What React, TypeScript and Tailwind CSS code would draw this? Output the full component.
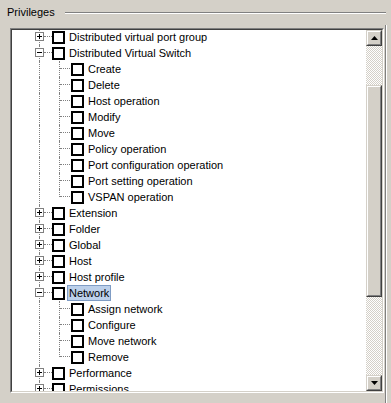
import React from "react";

type Row = {
  label: string;
  level: 0 | 1;
  expander?: "plus" | "minus";
  last?: boolean;
  selected?: boolean;
};

const rows: Row[] = [
  { label: "Distributed virtual port group", level: 0, expander: "plus" },
  { label: "Distributed Virtual Switch", level: 0, expander: "minus" },
  { label: "Create", level: 1 },
  { label: "Delete", level: 1 },
  { label: "Host operation", level: 1 },
  { label: "Modify", level: 1 },
  { label: "Move", level: 1 },
  { label: "Policy operation", level: 1 },
  { label: "Port configuration operation", level: 1 },
  { label: "Port setting operation", level: 1 },
  { label: "VSPAN operation", level: 1, last: true },
  { label: "Extension", level: 0, expander: "plus" },
  { label: "Folder", level: 0, expander: "plus" },
  { label: "Global", level: 0, expander: "plus" },
  { label: "Host", level: 0, expander: "plus" },
  { label: "Host profile", level: 0, expander: "plus" },
  { label: "Network", level: 0, expander: "minus", selected: true },
  { label: "Assign network", level: 1 },
  { label: "Configure", level: 1 },
  { label: "Move network", level: 1 },
  { label: "Remove", level: 1, last: true },
  { label: "Performance", level: 0, expander: "plus" },
  { label: "Permissions", level: 0, expander: "plus" },
];

function Expander({ kind }: { kind: "plus" | "minus" }) {
  return (
    <div className="absolute left-[5px] top-[3px] w-[9px] h-[9px] bg-white border border-[#808080]">
      <div className="absolute left-[1px] top-[3px] w-[5px] h-px bg-black" />
      {kind === "plus" && <div className="absolute left-[3px] top-[1px] w-px h-[5px] bg-black" />}
    </div>
  );
}

function Checkbox() {
  return <div className="w-[13px] h-[13px] shrink-0 border-2 border-black bg-white" />;
}

function TreeRow({ row }: { row: Row }) {
  return (
    <div className="flex items-center h-[16px] shrink-0">
      {/* top level line column */}
      <div className="relative w-[20px] h-[16px] shrink-0">
        <div className="absolute left-[9px] top-0 bottom-0 border-l border-dotted border-[#808080]" />
        {row.level === 0 && (
          <>
            <div className="absolute left-[14px] right-[-2px] top-[7px] border-t border-dotted border-[#808080]" />
            <Expander kind={row.expander ?? "plus"} />
          </>
        )}
      </div>
      {row.level === 1 && (
        <div className="relative w-[20px] h-[16px] shrink-0">
          <div
            className={
              "absolute left-[9px] top-0 border-l border-dotted border-[#808080] " +
              (row.last ? "h-[8px]" : "bottom-0")
            }
          />
          <div className="absolute left-[10px] right-0 top-[7px] border-t border-dotted border-[#808080]" />
        </div>
      )}
      <div className={row.level === 0 ? "ml-[2px]" : "ml-[1px]"}>
        <Checkbox />
      </div>
      <div
        className={
          "ml-[2px] h-[16px] flex items-center px-[1px] whitespace-nowrap border " +
          (row.selected ? "bg-[#bcd0ea] border-[#7f9cc4]" : "border-transparent")
        }
      >
        {row.label}
      </div>
    </div>
  );
}

function ScrollButton({ dir }: { dir: "up" | "down" }) {
  return (
    <div className="w-[16px] h-[16px] shrink-0 bg-[#d4d0c8] border border-t-[#d4d0c8] border-l-[#d4d0c8] border-r-[#404040] border-b-[#404040]">
      <div className="w-full h-full border border-t-white border-l-white border-r-[#808080] border-b-[#808080] flex items-center justify-center">
        <svg width="7" height="4" viewBox="0 0 7 4">
          {dir === "up" ? (
            <path d="M3.5 0 L7 4 L0 4 Z" fill="#000" />
          ) : (
            <path d="M0 0 L7 0 L3.5 4 Z" fill="#000" />
          )}
        </svg>
      </div>
    </div>
  );
}

export default function App() {
  return (
    <div className="w-[391px] h-[403px] overflow-hidden bg-[#d4d0c8] text-[11px] text-black font-['Liberation_Sans',Arial,sans-serif]">
      {/* Group box header */}
      <div className="flex items-center h-[25px] pl-[7px]">
        <span className="pr-[10px]">Privileges</span>
        <div className="flex-1 flex flex-col">
          <div className="h-px bg-[#808080]" />
          <div className="h-px bg-white" />
        </div>
        <div className="w-[5px]" />
      </div>

      <div className="flex">
        {/* Tree box */}
        <div className="ml-[10px] mt-[3px] w-[374px] h-[365px] border border-t-[#808080] border-l-[#808080] border-r-white border-b-white">
          <div className="w-full h-full flex border border-t-[#404040] border-l-[#404040] border-r-[#d4d0c8] border-b-[#d4d0c8]">
            <div className="flex-1 bg-white overflow-hidden pl-[18px] flex flex-col">
              <div className="-mt-px flex flex-col">
                {rows.map((r) => (
                  <TreeRow key={r.label} row={r} />
                ))}
              </div>
            </div>
            {/* vertical scrollbar */}
            <div className="w-[16px] flex flex-col bg-[image:repeating-conic-gradient(#ffffff_0%_25%,#d4d0c8_0%_50%)] bg-[length:2px_2px]">
              <ScrollButton dir="up" />
              <div className="h-[39px]" />
              <div className="h-[212px] bg-[#d4d0c8] border border-t-[#d4d0c8] border-l-[#d4d0c8] border-r-[#404040] border-b-[#404040]">
                <div className="w-full h-full border border-t-white border-l-white border-r-[#808080] border-b-[#808080]" />
              </div>
              <div className="flex-1" />
              <ScrollButton dir="down" />
            </div>
          </div>
        </div>
        {/* group box right edge */}
        <div className="ml-px flex">
          <div className="w-px h-[380px] bg-[#808080]" />
          <div className="w-px h-[380px] bg-white" />
        </div>
      </div>
    </div>
  );
}
